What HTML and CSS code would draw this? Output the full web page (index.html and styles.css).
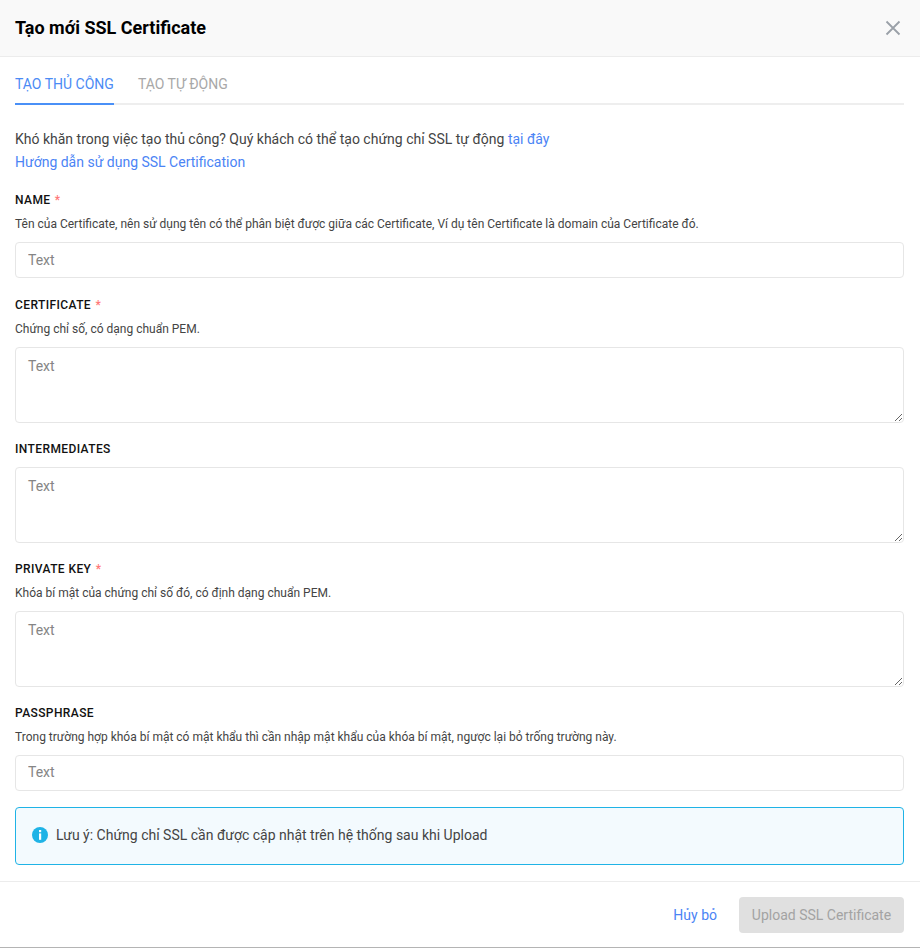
FILE: index.html
```html
<!DOCTYPE html>
<html lang="vi">
<head>
<meta charset="utf-8">
<title>Tạo mới SSL Certificate</title>
<link rel="stylesheet" href="styles.css">
</head>
<body>
<div class="modal">
  <header class="modal-header">
    <h1 class="modal-title">Tạo mới SSL Certificate</h1>
    <button class="close" type="button" aria-label="Đóng">
      <svg width="16" height="16" viewBox="0 0 16 16"><path d="M1.5 1.5 14.5 14.5M14.5 1.5 1.5 14.5" stroke="#9aa0a8" stroke-width="1.8" fill="none"/></svg>
    </button>
  </header>
  <div class="modal-body">
    <nav class="tabs">
      <a class="tab tab-active">TẠO THỦ CÔNG</a>
      <a class="tab">TẠO TỰ ĐỘNG</a>
    </nav>
    <div class="intro">
      <p>Khó khăn trong việc tạo thủ công? Quý khách có thể tạo chứng chỉ SSL tự động <a class="link">tại đây</a></p>
      <p><a class="link">Hướng dẫn sử dụng SSL Certification</a></p>
    </div>
    <div class="field">
      <div class="label">NAME <span class="req">*</span></div>
      <div class="help">Tên của Certificate, nên sử dụng tên có thể phân biệt được giữa các Certificate, Ví dụ tên Certificate là domain của Certificate đó.</div>
      <input class="control" type="text" placeholder="Text">
    </div>
    <div class="field">
      <div class="label">CERTIFICATE <span class="req">*</span></div>
      <div class="help">Chứng chỉ số, có dạng chuẩn PEM.</div>
      <textarea class="control area" placeholder="Text"></textarea>
    </div>
    <div class="field">
      <div class="label">INTERMEDIATES</div>
      <textarea class="control area" placeholder="Text"></textarea>
    </div>
    <div class="field">
      <div class="label">PRIVATE KEY <span class="req">*</span></div>
      <div class="help">Khóa bí mật của chứng chỉ số đó, có định dạng chuẩn PEM.</div>
      <textarea class="control area" placeholder="Text"></textarea>
    </div>
    <div class="field">
      <div class="label">PASSPHRASE</div>
      <div class="help">Trong trường hợp khóa bí mật có mật khẩu thì cần nhập mật khẩu của khóa bí mật, ngược lại bỏ trống trường này.</div>
      <input class="control control-last" type="text" placeholder="Text">
    </div>
    <div class="alert">
      <svg class="alert-icon" width="16" height="16" viewBox="0 0 16 16"><circle cx="8" cy="8" r="8" fill="#1fb3e6"/><rect x="7" y="3" width="2.2" height="2.2" fill="#fff"/><rect x="7" y="6.4" width="2.2" height="6.4" fill="#fff"/></svg>
      <span>Lưu ý: Chứng chỉ SSL cần được cập nhật trên hệ thống sau khi Upload</span>
    </div>
  </div>
  <footer class="modal-footer">
    <a class="cancel link">Hủy bỏ</a>
    <button class="submit" type="button" disabled>Upload SSL Certificate</button>
  </footer>
</div>
</body>
</html>
```
FILE: styles.css
```css
* { box-sizing: border-box; }
html, body { margin: 0; padding: 0; background: #fff; }
body { font-family: Roboto, "Noto Sans", sans-serif; color: #444; font-size: 14px; width: 920px; height: 948px; overflow: hidden; }
.modal { display: flex; flex-direction: column; height: 948px; border-bottom: 1px solid #b4b4b4; }
.modal-header { height: 57px; flex: none; display: flex; align-items: center; justify-content: space-between; padding: 0 19px 0 15px; background: #f9f9f9; border-bottom: 1px solid #ececec; }
.modal-title { margin: 0; font-size: 18px; font-weight: 700; color: #000; line-height: 24px; }
.close { border: 0; background: none; padding: 0; width: 16px; height: 16px; display: block; }
.close svg { display: block; }
.modal-body { flex: 1; padding: 0 16px 0 15px; }
.tabs { display: flex; gap: 24px; height: 48px; border-bottom: 2px solid #eee; }
.tab { height: 48px; line-height: 54px; font-size: 14px; color: #a8a8a8; padding: 0; }
.tab-active { color: #4b8bf5; border-bottom: 2px solid #4a90f7; }
.intro { margin-top: 23px; font-size: 14px; line-height: 23px; color: #444; }
.intro p { margin: 0; }
.link { color: #4b84f5; text-decoration: none; }
.field { margin-top: 17.25px; }
.label { font-size: 12px; font-weight: 500; color: #111; line-height: 18px; letter-spacing: .4px; }
.req { color: #f77; margin-left: 1px; }
.help { font-size: 12px; color: #444; line-height: 18px; margin-top: 6px; margin-bottom: 9px; }
.label + .control { margin-top: 9px; }
.control { display: block; width: 100%; height: 36px; border: 1px solid #e6e6e6; border-radius: 4px; padding: 0 12px; font-family: inherit; font-size: 14px; color: #444; background: #fff; outline: 0; }
.control-last { padding-bottom: 2px; }
.control::placeholder { color: #858585; opacity: 1; }
.area { height: 76px; padding: 10px 12px; resize: vertical; line-height: 17px; }
.alert { margin-top: 16px; height: 58px; display: flex; align-items: center; gap: 8px; padding: 0 16px 2px; background: #f3fafe; border: 1px solid #1fb3e6; border-radius: 4px; font-size: 14px; color: #444; }
.alert-icon { flex: none; }
.modal-footer { height: 66px; flex: none; display: flex; align-items: center; justify-content: flex-end; gap: 22px; padding: 0 16px; border-top: 1px solid #ececec; }
.submit { height: 36px; width: 165px; border: 0; border-radius: 4px; background: #e0e0e0; color: #a3a3a3; font-family: inherit; font-size: 14px; padding: 0; }
```
